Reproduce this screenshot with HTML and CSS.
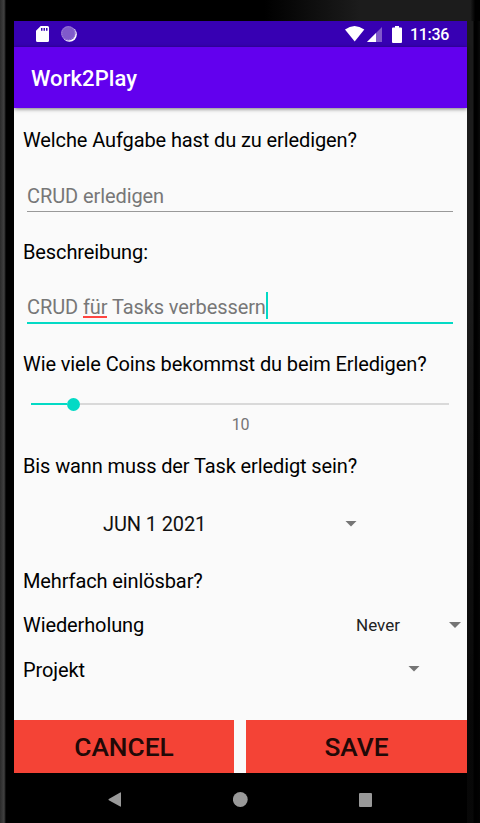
FILE: index.html
```
<!DOCTYPE html>
<html lang="de">
<head>
<meta charset="utf-8">
<title>Work2Play</title>
<link rel="stylesheet" href="styles.css">
</head>
<body>
<div class="device">
  <div class="screen">
    <header class="status">
      <svg class="sd" width="13" height="16" viewBox="0 0 13 16"><path fill="#fff" fill-rule="evenodd" d="M4.700 0H11.500Q13 0 13 1.500V14.500Q13 16 11.500 16H1.500Q0 16 0 14.500V4.700ZM5 2V4.700H6.500V2ZM7.500 2V4.700H9V2ZM10 2V4.700H11.500V2Z"/></svg>
      <svg class="sync" width="16" height="16" viewBox="0 0 16 16"><circle cx="8.500" cy="8.500" r="7.300" fill="#fff"/><circle cx="7.300" cy="7.300" r="7.300" fill="#805acb"/><circle cx="7.300" cy="7.300" r="6.500" fill="none" stroke="#a78bdc" stroke-width="1" stroke-dasharray="1 1"/></svg>
      <svg class="wifi" width="20" height="16" viewBox="0 0 20 16"><path fill="#fff" d="M0 3.500Q9.500-3.500 19.300 3.500L9.700 15.500Z"/></svg>
      <svg class="signal" width="15" height="15" viewBox="0 0 15 15"><path fill="#8059cb" d="M15 0V15H0Z"/><path fill="#fff" d="M9 6V15H0Z"/></svg>
      <svg class="battery" width="10" height="17" viewBox="0 0 10 17"><path fill="#fff" d="M3 0H7V1.500H9Q10 1.500 10 2.500V16Q10 17 9 17H1Q0 17 0 16V2.500Q0 1.500 1 1.500H3Z"/></svg>
      <span class="clock">11:36</span>
    </header>
    <div class="appbar"><span>Work2Play</span></div>
    <main class="form">
      <div class="label first">Welche Aufgabe hast du zu erledigen?</div>
      <div class="field">CRUD erledigen</div>
      <div class="label second">Beschreibung:</div>
      <div class="field active">CRUD&nbsp;<span class="typo">für</span> Tasks verbessern<i class="caret"></i></div>
      <div class="label third">Wie viele Coins bekommst du beim Erledigen?</div>
      <div class="slider"><i class="filled"></i><i class="thumb"></i><i class="rest"></i></div>
      <div class="amount">10</div>
      <div class="label until">Bis wann muss der Task erledigt sein?</div>
      <div class="date"><span>JUN 1 2021</span><i class="arrow"></i></div>
      <div class="label multi">Mehrfach einlösbar?</div>
      <div class="row repeat"><span class="label">Wiederholung</span><span class="choice">Never</span><i class="arrow"></i></div>
      <div class="row project"><span class="label">Projekt</span><i class="arrow"></i></div>
    </main>
    <div class="actions"><div class="button">CANCEL</div><div class="button">SAVE</div></div>
    <nav class="nav">
      <svg width="15" height="16" viewBox="0 0 15 16"><path fill="#999" d="M12.200.5Q13 0 13 1V14Q13 15 12.200 14.500L.8 8.200Q0 7.500.8 7Z"/></svg>
      <svg width="16" height="16" viewBox="0 0 16 16"><circle cx="7.300" cy="7.500" r="7.400" fill="#999"/></svg>
      <svg width="14" height="16" viewBox="0 0 14 16"><rect y="1" width="13" height="14" rx="1" fill="#999"/></svg>
    </nav>
  </div>
</div>
</body>
</html>
```
FILE: styles.css
```
* { box-sizing: border-box; }
body { margin: 0; font-family: Roboto, sans-serif; background: #000; }
.device {
  width: 480px; height: 823px; padding: 21px 13px 0 14px; overflow: hidden;
  background:
    linear-gradient(90deg, #2a2a2a 0, #414141 4px, #222 5px, #000 6px) 0 0 / 7px 100% no-repeat,
    linear-gradient(#0000 30%, #000b 85%) 467px 21px / 13px 100% no-repeat,
    linear-gradient(90deg, #1c1c1c 0 6px, #000 7px, #000 10px, #0a0a0a 13px) 467px 21px / 13px 100% no-repeat,
    linear-gradient(90deg, #000 55%, #1c1c1c 75%, #1c1c1c 98%, #000 99%) 0 0 / 100% 21px no-repeat,
    #000;
}
.screen { height: 802px; display: flex; flex-direction: column; background: #fafafa; }
.status { height: 26px; flex: none; display: flex; align-items: flex-start; padding: 5px 18px 0 22px; background: #3700b3; color: #fff; }
.sync { margin-left: 12px; }
.wifi { margin-left: auto; }
.signal { margin: 1px 0 0 2px; }
.battery { margin-left: 10px; }
.clock { margin-left: 8px; font-size: 16px; line-height: 18px; font-weight: 500; letter-spacing: -.3px; }
.appbar { height: 61px; flex: none; padding: 2px 17px 0; display: flex; align-items: center; background: #6200ee; color: #fff; font-size: 22px; font-weight: 500; letter-spacing: .08px; box-shadow: 0 1px 4px #0008; }
.form { height: 612px; flex: none; }
.label { color: #000; font-size: 20px; line-height: 24px; padding-left: 9px; white-space: nowrap; letter-spacing: -.11px; }
.first { margin-top: 20px; }
.field { margin: 28px 14px 0 13px; height: 32px; line-height: 32px; font-size: 20px; letter-spacing: -.09px; color: #777; border-bottom: 1px solid #999; display: flex; white-space: pre; }
.field.active { border-bottom: 2px solid #03dac5; height: 32px; line-height: 31px; }
.typo { height: 26px; border-bottom: 2px solid #ff4540; }
.caret { width: 2px; height: 27px; background: #03dac5; }
.second, .third { margin-top: 28px; }
.slider { margin: 21px 18px 0 17px; height: 14px; display: flex; align-items: center; }
.filled { width: 36px; height: 2px; background: #03dac5; }
.thumb { width: 13px; height: 13px; border-radius: 50%; background: #03dac5; }
.rest { flex: 1; height: 2px; background: #d9d9d9; }
.amount { margin-top: 4px; text-align: center; font-size: 16px; line-height: 20px; color: #757575; letter-spacing: -.2px; }
.until { margin-top: 19px; }
.date { margin: 34px 110px 0 89px; height: 24px; display: flex; justify-content: space-between; align-items: center; font-size: 20px; letter-spacing: -.12px; color: #111; }
.arrow { width: 12px; height: 6px; background: #757575; clip-path: polygon(0 0, 100% 0, 50% 100%); }
.date .arrow { margin-bottom: 1px; }
.multi { margin-top: 33px; }
.row { height: 24px; margin-top: 20px; display: flex; align-items: center; }
.choice { margin-left: auto; font-size: 17px; color: #222; }
.repeat .arrow { margin: 0 6px 0 49px; }
.project { margin-top: 21px; }
.project .arrow { margin: 0 47px 3px auto; }
.actions { height: 53px; flex: none; display: grid; grid-template-columns: 220px 221px; column-gap: 12px; }
.button { display: flex; align-items: center; justify-content: center; padding-top: 1px; background: #f44336; color: #210907; font-size: 26.300px; font-weight: 500; }
.nav { height: 50px; flex: none; background: #000; display: flex; justify-content: space-between; padding: 19px 94px 0; }
```
